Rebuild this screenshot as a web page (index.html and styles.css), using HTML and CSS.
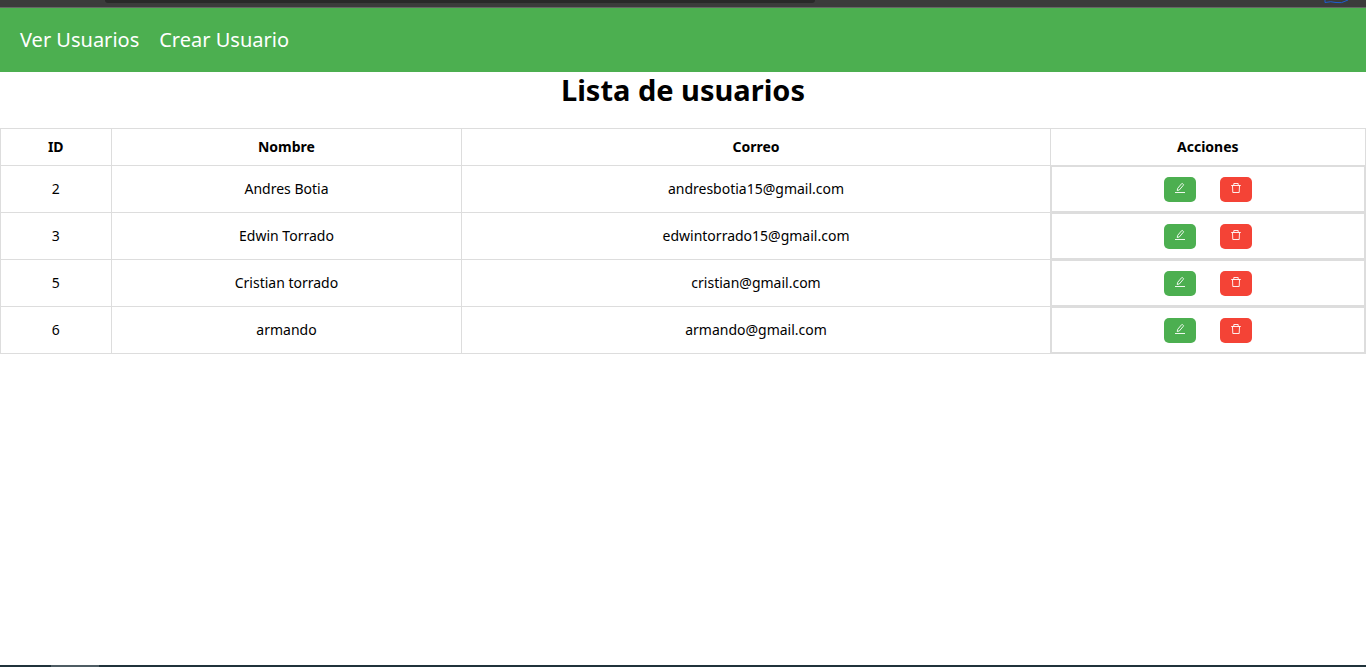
FILE: index.html
```html
<!DOCTYPE html>
<html lang="es">
<head>
<meta charset="utf-8">
<title>Lista de usuarios</title>
<link rel="stylesheet" href="styles.css">
</head>
<body>
<svg class="defs" aria-hidden="true">
  <symbol id="edit" viewBox="0 0 12 12"><path d="M1 10.5h10M3.2 8.5l.5-2.2L7.6 1.7q.5-.5 1 0l.7.6q.5.5 0 1L5.4 7.9z"/></symbol>
  <symbol id="trash" viewBox="0 0 12 12"><path d="M1.2 3.5h9.6M3.8 3.5v-2h4.4v2M2.5 3.5l.3 7h6.4l.3-7"/></symbol>
</svg>
<div class="chrome"><div class="address"></div><svg class="swirl" viewBox="0 0 28 4" aria-hidden="true"><path d="M2 0v2.5q6-1.5 11 0T25 0"/></svg></div>
<nav class="navbar">
  <a class="nav-link" href="#">Ver Usuarios</a>
  <a class="nav-link" href="#">Crear Usuario</a>
</nav>
<main class="content">
  <h1 class="title">Lista de usuarios</h1>
  <table class="users">
    <colgroup><col class="col-id"><col class="col-name"><col class="col-mail"><col class="col-actions"></colgroup>
    <thead><tr><th>ID</th><th>Nombre</th><th>Correo</th><th>Acciones</th></tr></thead>
    <tbody>
      <tr><td>2</td><td>Andres Botia</td><td>andresbotia15@gmail.com</td><td class="actions-cell"><div class="actions"><button class="btn edit" aria-label="Editar"><svg class="icon"><use href="#edit"/></svg></button><button class="btn delete" aria-label="Eliminar"><svg class="icon"><use href="#trash"/></svg></button></div></td></tr>
      <tr><td>3</td><td>Edwin Torrado</td><td>edwintorrado15@gmail.com</td><td class="actions-cell"><div class="actions"><button class="btn edit" aria-label="Editar"><svg class="icon"><use href="#edit"/></svg></button><button class="btn delete" aria-label="Eliminar"><svg class="icon"><use href="#trash"/></svg></button></div></td></tr>
      <tr><td>5</td><td>Cristian torrado</td><td>cristian@gmail.com</td><td class="actions-cell"><div class="actions"><button class="btn edit" aria-label="Editar"><svg class="icon"><use href="#edit"/></svg></button><button class="btn delete" aria-label="Eliminar"><svg class="icon"><use href="#trash"/></svg></button></div></td></tr>
      <tr><td>6</td><td>armando</td><td>armando@gmail.com</td><td class="actions-cell"><div class="actions"><button class="btn edit" aria-label="Editar"><svg class="icon"><use href="#edit"/></svg></button><button class="btn delete" aria-label="Eliminar"><svg class="icon"><use href="#trash"/></svg></button></div></td></tr>
    </tbody>
  </table>
</main>
<footer class="taskbar"><div class="task"></div></footer>
</body>
</html>
```
FILE: styles.css
```css
* { box-sizing: border-box; }
body {
  margin: 0;
  min-height: 100vh;
  display: flex;
  flex-direction: column;
  background: #fff;
  color: #000;
  font-family: "Noto Sans", sans-serif;
  font-size: 14px;
}
.defs { position: absolute; width: 0; height: 0; }
.chrome {
  height: 8px;
  display: flex;
  justify-content: space-between;
  padding: 0 15px 0 105px;
  background: #3b3b3b;
  border-bottom: 1px solid #666;
}
.address {
  width: 57%;
  height: 3px;
  background: #292929;
  border-radius: 0 0 8px 8px;
}
.swirl { width: 28px; height: 4px; fill: none; stroke: #1d5fd0; }
.navbar {
  display: flex;
  align-items: center;
  gap: 20px;
  height: 64px;
  padding: 0 20px;
  background: #4caf50;
}
.nav-link { color: #fff; font-size: 20px; line-height: 26px; text-decoration: none; }
.content { flex: 1; }
.title {
  margin: 0 0 20px;
  font-size: 29px;
  line-height: 36px;
  text-align: center;
}
.users {
  width: 100%;
  table-layout: fixed;
  border-collapse: collapse;
  text-align: center;
}
.col-id { width: 8.1%; }
.col-name { width: 25.7%; }
.col-mail { width: 43.1%; }
.col-actions { width: 23.1%; }
.users th, .users td {
  border: 1px solid #ddd;
  padding: 8px;
  line-height: 20px;
}
.users .actions-cell { padding: 0; }
.actions {
  display: flex;
  justify-content: center;
  gap: 24px;
  padding: 10px 0 9px;
  border: 1px solid #ddd;
}
.btn {
  display: flex;
  justify-content: center;
  width: 32px;
  height: 25px;
  padding: 5px 0 0;
  border: 0;
  border-radius: 5px;
}
.edit { background: #4caf50; }
.delete { background: #f44336; }
.icon {
  width: 12px;
  height: 12px;
  fill: none;
  stroke: #fff;
  stroke-width: 0.9;
}
.taskbar { height: 2px; padding-left: 51px; background: #20333b; }
.task { width: 48px; height: 2px; background: #4e5c63; }
```
